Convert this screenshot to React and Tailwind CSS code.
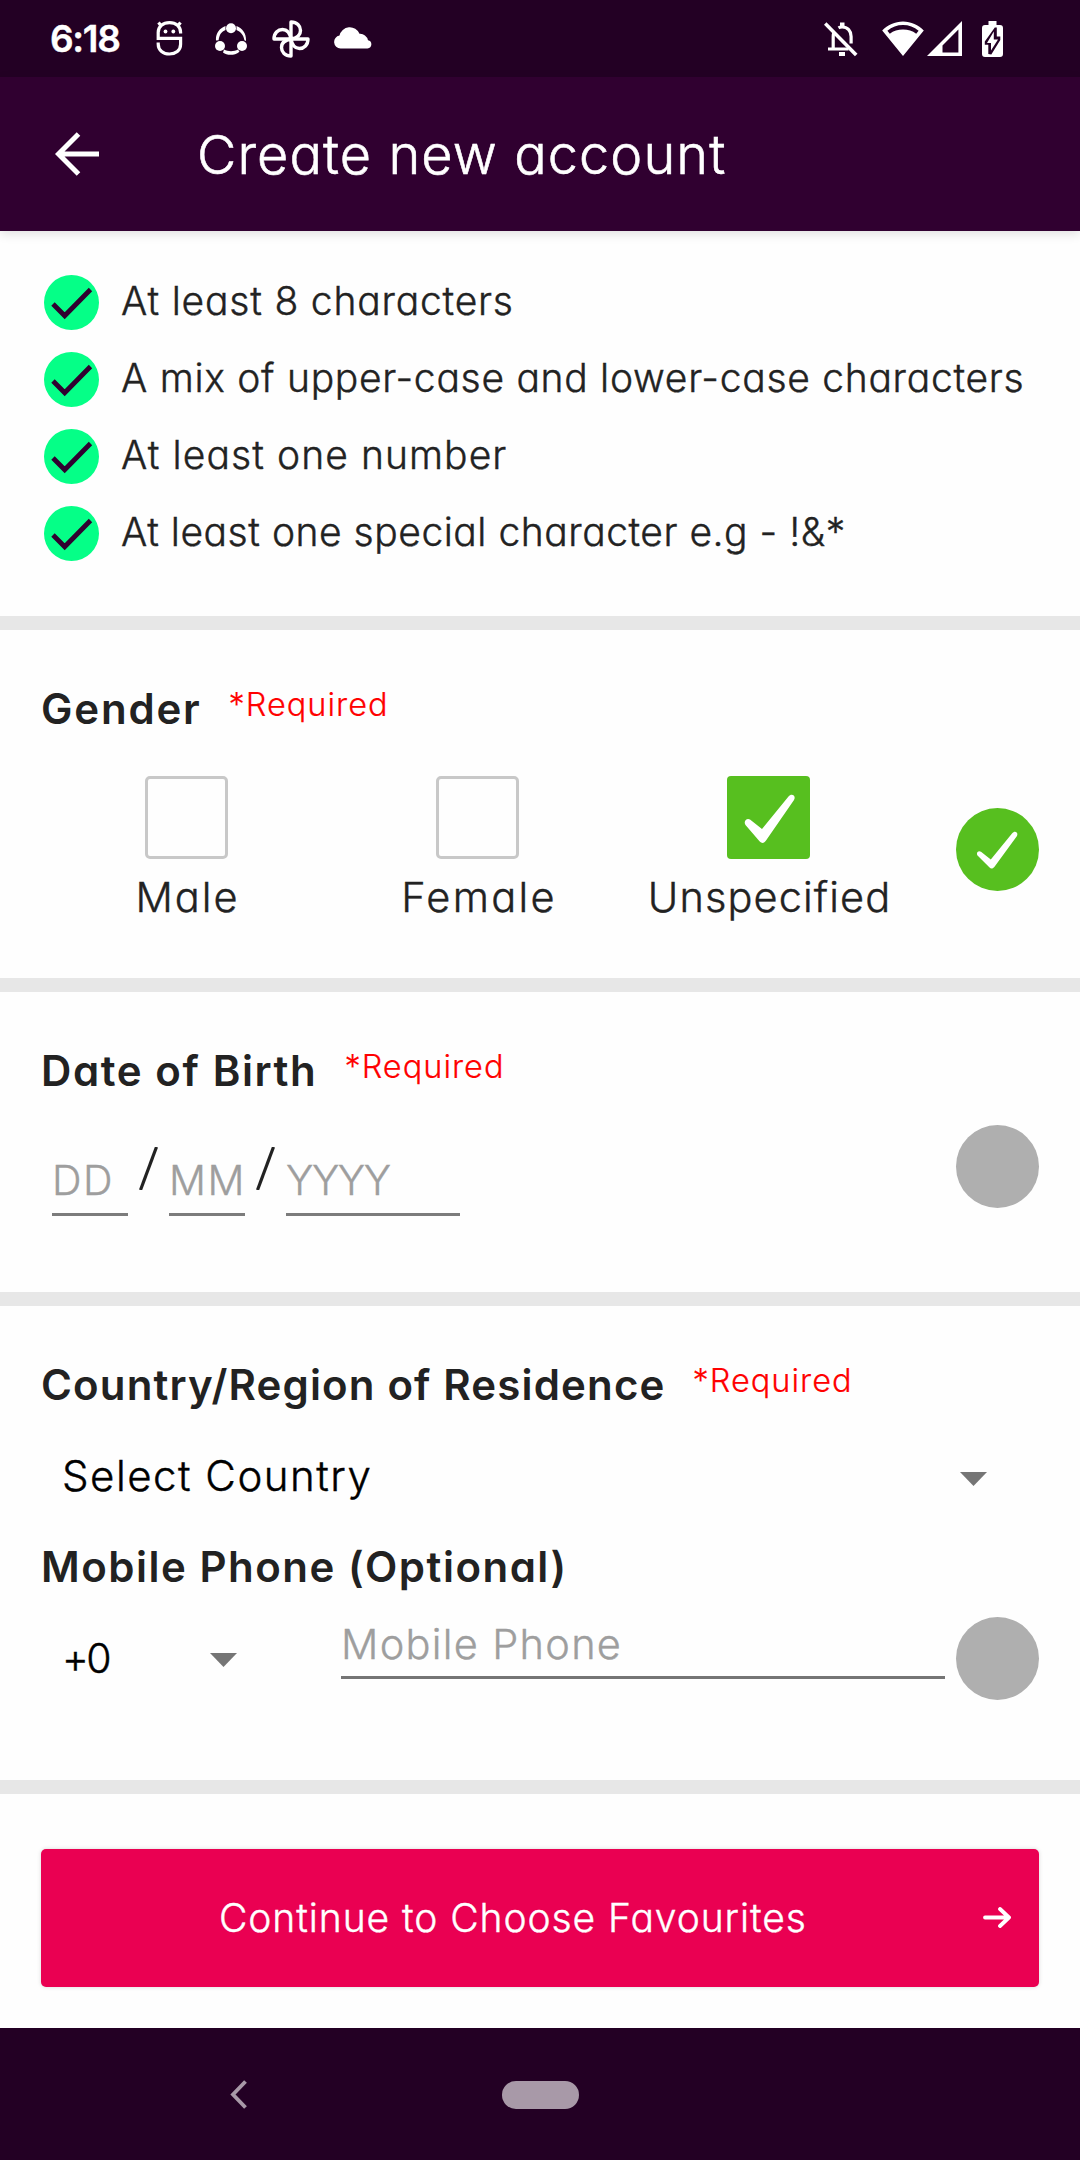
const RULES = [
  ["At least 8 characters", "tracking-[0.8px]"],
  ["A mix of upper-case and lower-case characters", "tracking-[0.71px]"],
  ["At least one number", "tracking-[1.08px]"],
  ["At least one special character e.g - !&*", "tracking-[0.52px]"],
];

const GENDERS = [
  { label: "Male", checked: false, spacing: "tracking-[2px] pl-[2px]" },
  { label: "Female", checked: false, spacing: "tracking-[2.3px] pl-[3px]" },
  { label: "Unspecified", checked: true, spacing: "tracking-[1.1px] pl-[2px]" },
];

function StatusBar() {
  return (
    <div className="flex h-[77px] items-center bg-[#230024] text-white">
      <span className="ml-[50px] w-[96px] text-[37px] font-semibold leading-[77px] tracking-[-1.3px]">6:18</span>
      <svg className="ml-[10px] h-[37px] w-[27px]" viewBox="0 0 27 37" fill="none" stroke="currentColor" strokeWidth="3.2">
        <path d="M24.6 13.5v-1C24.6 6.500 20 2.600 13.500 2.600S2.200 6.500 2.200 12.500v5.800h22.400v6C24.600 30.500 19.500 34 13.500 34S2.200 30.500 2.200 24v-1.500" />
        <path d="M4.500 5 2.500 2.500M22.500 5l2-2.500" />
        <circle cx="9.500" cy="11.500" r="1.900" fill="currentColor" stroke="none" />
        <circle cx="17.300" cy="11.500" r="1.900" fill="currentColor" stroke="none" />
      </svg>
      <svg className="ml-[32px] h-[32px] w-[32px]" viewBox="0 0 32 32" fill="currentColor">
        <circle cx="16" cy="5.200" r="5" />
        <circle cx="5" cy="23" r="5" />
        <circle cx="27" cy="23" r="5" />
        <path d="M10.500 3C4 5.500.4 11 1 17.500l2.600-.3C4.500 11.500 6.500 8.500 10.500 7zM21.500 3C28 5.500 31.400 11 31 18l-1.600-.8C28.500 12 25.500 8.500 21.500 7zM9 26.500c4 2.200 10 2.200 14 0l1.500 2.200C19 33 12 32.500 8 29.500z" />
      </svg>
      <svg className="ml-[25px] h-[38px] w-[38px]" viewBox="0 0 38 38" fill="none" stroke="currentColor" strokeWidth="3.400" strokeLinejoin="round">
        <path d="M19 19V2c6 0 9.500 4 9.500 8.500S25 18 19 19Z" />
        <path d="M19 19h17c0 6-4 9.500-8.500 9.500S20 25 19 19Z" />
        <path d="M19 19v17c-6 0-9.500-4-9.500-8.500S13 20 19 19Z" />
        <path d="M19 19H2c0-6 4-9.500 8.500-9.500S18 13 19 19Z" />
      </svg>
      <svg className="mb-[2px] ml-[24px] h-[22px] w-[38px]" viewBox="0 0 38 22" fill="currentColor">
        <path d="M6.500 21.500a6.500 6.500 0 0 1-1-12.900A10.500 10.500 0 0 1 25.500 6.800 8 8 0 0 1 34 13.200a4.200 4.200 0 0 1-.5 8.300Z" />
      </svg>
      <div className="mr-[77px] ml-auto flex items-center">
        <svg className="h-[36px] w-[34px]" viewBox="0 0 34 36" fill="none" stroke="currentColor" strokeWidth="3.200">
          <path d="M9.200 28V15.500c0-1.600.3-3 .9-4.200M4 28h20.500M14.500 6.800c1-.6 2.300-.8 3.600-.8 5.500 0 9 4 9 9.500v7" />
          <path d="M16 3.500h4.500M15 33h6" strokeWidth="4" />
          <path d="m1.200 2.500 31 31.500" strokeWidth="3.600" />
        </svg>
        <svg className="ml-[24px] h-[35px] w-[42px]" viewBox="0 0 42 35" fill="currentColor">
          <path fillRule="evenodd" d="M21 .5c8 0 15.500 3.500 20.800 9L21 35 .2 9.500C5.500 4 13 .5 21 .5Zm0 3.600c-5.800 0-11.200 2-15.600 5.600l2.400 3C11.500 10 16 8.600 21 8.600s9.500 1.400 13.200 4.100l2.400-3C32.200 6.100 26.800 4.100 21 4.100Z" />
        </svg>
        <svg className="ml-[3px] h-[35px] w-[35px]" viewBox="0 0 35 35" fill="currentColor">
          <path fillRule="evenodd" d="M35 0v35H0ZM31.400 8.500 15.500 24.500v7h15.900Z" />
        </svg>
        <svg className="ml-[20px] h-[36px] w-[21px]" viewBox="0 0 21 36" fill="currentColor">
          <path fillRule="evenodd" d="M6.500 0h8v4H18a3 3 0 0 1 3 3v26a3 3 0 0 1-3 3H3a3 3 0 0 1-3-3V7a3 3 0 0 1 3-3h3.500ZM12.800 6.500 2.800 20.500v3.300h3.500V33l3 .5 9-14.500v-3.500h-3.500v-9Z" />
          <path d="M11.800 10.500v8h4.200L9 29.500V22H5Z" />
        </svg>
      </div>
    </div>
  );
}

function Header() {
  return (
    <header className="relative flex h-[154px] items-center bg-[#300030] text-white shadow-[0_3px_10px_rgba(0,0,0,0.12)]">
      <svg className="ml-[55px] h-[44px] w-[44px]" viewBox="0 0 44 44" fill="none" stroke="currentColor" strokeWidth="5">
        <path d="M44 22H4M23.500 2 3.500 22l20 20" />
      </svg>
      <h1 className="ml-[98px] text-[54px] font-light tracking-[1.1px] [-webkit-text-stroke:0.6px_currentColor]">Create new account</h1>
    </header>
  );
}

function RuleCheck() {
  return (
    <svg className="h-[55px] w-[55px]" viewBox="0 0 55 55">
      <circle cx="27.500" cy="27.500" r="27.500" fill="#05ff87" />
      <path d="m9 29 11.700 11.800L46.500 14.500" fill="none" stroke="#300030" strokeWidth="4.800" />
    </svg>
  );
}

function Divider() {
  return <div className="h-[14px] bg-[#e7e7e7]" />;
}

function Heading({ children, className, required }) {
  return (
    <div className="flex h-[50px] items-start">
      <h2 className={`-mt-px text-[42px] leading-[50px] font-semibold whitespace-nowrap [-webkit-text-stroke:0px] ${className}`}>{children}</h2>
      {required && (
        <span className="ml-[27px] text-[32.5px] leading-[40px] tracking-[1px] text-[#ff0000] [-webkit-text-stroke:0.2px_currentColor]">*Required</span>
      )}
    </div>
  );
}

function Dot() {
  return <div className="h-[83px] w-[83px] shrink-0 rounded-full bg-[#afafaf]" />;
}

function Caret() {
  return (
    <svg className="h-[14px] w-[27px]" viewBox="0 0 27 14" fill="#757575">
      <path d="M0 0h27L13.500 14Z" />
    </svg>
  );
}

function Slash() {
  return (
    <svg className="mt-[4px] h-[43px] w-[19px]" viewBox="0 0 19 43" stroke="#222" strokeWidth="3.200">
      <path d="M1.500 43 17.500 0" />
    </svg>
  );
}

function DateField({ text, className, spacing }) {
  return (
    <div className={`mt-[12px] h-[61px] border-b-[3px] border-[#7c7c7c] text-[41px] leading-[50px] text-[#9e9e9e] ${className}`}>
      <span className={spacing}>{text}</span>
    </div>
  );
}

export default function App() {
  return (
    <div className="flex h-[2160px] w-[1080px] flex-col overflow-hidden bg-[#fefefe] font-['Inter',sans-serif] font-light text-[#222] [font-feature-settings:'cv11'] [-webkit-text-stroke:0.4px_currentColor]">
      <StatusBar />
      <Header />

      <ul className="h-[385px] pt-[33px]">
        {RULES.map(([text, spacing]) => (
          <li key={text} className="flex h-[77px] items-center pl-[44px]">
            <RuleCheck />
            <span className={`ml-[22px] pb-[2px] text-[39px] whitespace-nowrap ${spacing}`}>{text}</span>
          </li>
        ))}
      </ul>
      <Divider />

      <section className="h-[348px] pt-[55px] pl-[41px]">
        <Heading className="tracking-[1.8px]" required>Gender</Heading>
        <div className="mt-[41px] flex items-start">
          {GENDERS.map(({ label, checked, spacing }) => (
            <div key={label} className="flex w-[291px] flex-col items-center">
              {checked ? (
                <div className="h-[83px] w-[83px] rounded-[4px] bg-[#57bf1f]">
                  <svg className="h-[83px] w-[83px]" viewBox="0 0 83 83" fill="#fff">
                    <path d="M23 43.500 35 53 61.500 20.500c3-4 8-.8 5.500 3.500L39 64.500c-2 3-4 3.200-6.500.8L18.500 49c-2.500-4 1.500-7.500 4.500-5.500Z" />
                  </svg>
                </div>
              ) : (
                <div className="h-[83px] w-[83px] rounded-[5px] border-[3px] border-[#c8c8c8]" />
              )}
              <span className={`mt-[13px] text-[41.5px] leading-[50px] ${spacing}`}>{label}</span>
            </div>
          ))}
          <svg className="mt-[32px] ml-[42px] h-[83px] w-[83px]" viewBox="0 0 83 83" fill="#fff">
            <circle cx="41.500" cy="41.500" r="41.500" fill="#57bf1f" />
            <path d="m25 43.800 9.800 7.700L56 25.500c3-3.500 6.800-.8 4.800 2.700L38.500 58.800c-1.800 2.200-3.500 2.400-5.200.5L21.500 47.500c-1.800-3 1-5.500 3.500-3.700Z" />
          </svg>
        </div>
      </section>
      <Divider />

      <section className="h-[300px] pt-[55px] pl-[41px]">
        <Heading className="tracking-[1.6px]" required>Date of Birth</Heading>
        <div className="mt-[28px] flex items-start pl-[11px]">
          <div className="mt-[18px] flex items-start">
            <DateField text="DD" className="w-[76px]" spacing="tracking-[1.5px]" />
            <div className="ml-[11px]"><Slash /></div>
            <DateField text="MM" className="ml-[11px] w-[76px]" spacing="tracking-[1.5px]" />
            <div className="ml-[11px]"><Slash /></div>
            <DateField text="YYYY" className="ml-[11px] w-[174px]" spacing="tracking-[-1.4px]" />
          </div>
          <div className="ml-[496px]"><Dot /></div>
        </div>
      </section>
      <Divider />

      <section className="h-[474px] pt-[55px] pl-[41px]">
        <Heading className="tracking-[1.15px]" required>Country/Region of Residence</Heading>
        <div className="mt-[40px] flex h-[50px] items-center pl-[21px] text-black">
          <span className="w-[898px] text-[42px] leading-[50px] tracking-[1.5px]">Select Country</span>
          <div className="pt-[5px]"><Caret /></div>
        </div>
        <div className="mt-[41px]">
          <Heading className="pt-px tracking-[1.5px]">Mobile Phone (Optional)</Heading>
        </div>
        <div className="mt-[25px] flex items-center">
          <span className="w-[147px] pl-[21px] text-[41px] leading-[83px] tracking-[-2.5px] text-black">+0</span>
          <div className="ml-[22px] pt-[3px]"><Caret /></div>
          <div className="mb-[21px] ml-[104px] h-[62px] w-[604px] border-b-[3px] border-[#757575] text-[41.5px] leading-[55px] tracking-[1.3px] text-[#9e9e9e]">
            Mobile Phone
          </div>
          <div className="ml-[11px]"><Dot /></div>
        </div>
      </section>
      <Divider />

      <div className="h-[234px] px-[41px] pt-[55px]">
        <button className="flex h-[138px] w-full items-center rounded-[5px] bg-[#ea0052] text-white shadow-[0_0_4px_rgba(0,0,0,0.15)]">
          <span className="ml-[178px] text-[39px] tracking-[0.93px] whitespace-nowrap">Continue to Choose Favourites</span>
          <svg className="mr-[28px] mb-[1px] ml-auto h-[21px] w-[28px]" viewBox="0 0 28 21" fill="none" stroke="currentColor" strokeWidth="3.800" strokeLinecap="round" strokeLinejoin="round">
            <path d="M2 10.500h24M17 2l9 8.500-9 8.500" />
          </svg>
        </button>
      </div>

      <nav className="flex h-[132px] items-center bg-[#230024]">
        <svg className="mt-[1px] ml-[230px] h-[29px] w-[17px]" viewBox="0 0 17 29" fill="none" stroke="#a899a8" strokeWidth="3.800">
          <path d="M15.500 1.500 3 14.500l12.500 13" />
        </svg>
        <div className="mt-[1px] ml-[255px] h-[28px] w-[77px] rounded-[14px] bg-[#a899a8]" />
      </nav>
    </div>
  );
}
